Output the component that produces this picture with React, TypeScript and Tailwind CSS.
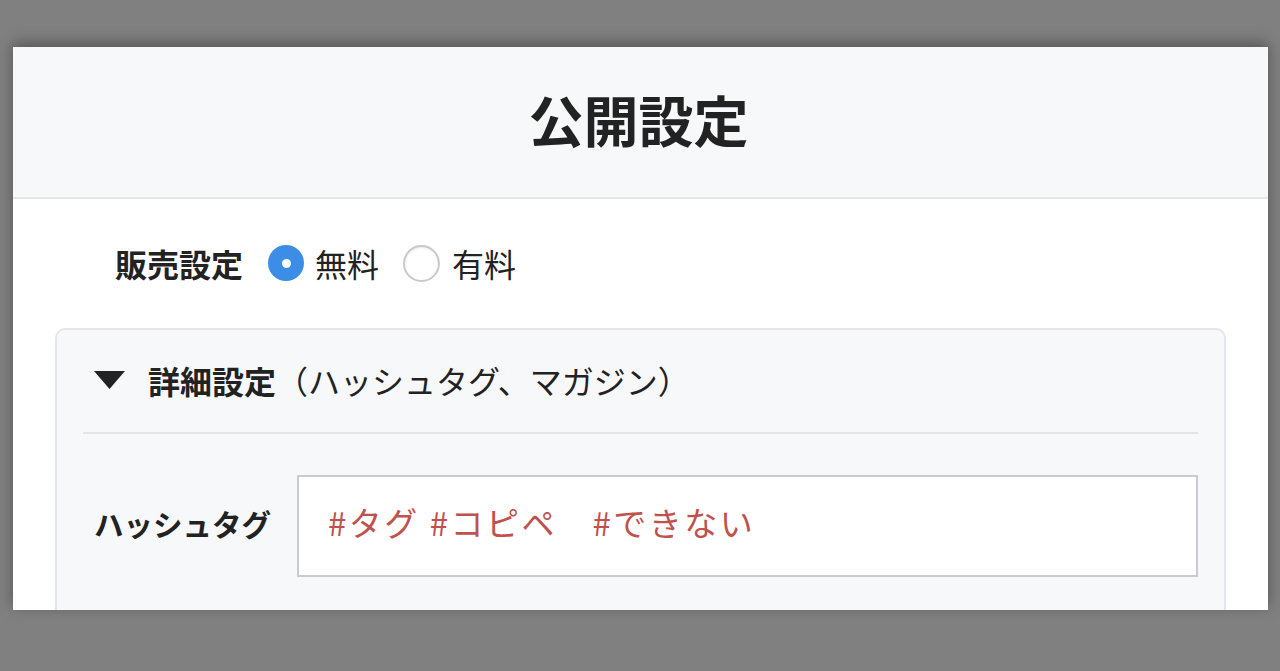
import React from "react";

const font = { fontFamily: '"Noto Sans CJK JP", "Noto Sans", sans-serif' };

function Radio({ checked }: { checked: boolean }) {
  return checked ? (
    <span className="flex h-[36px] w-[36px] shrink-0 items-center justify-center rounded-full bg-[#3c8de6]">
      <span className="block h-[9px] w-[9px] rounded-full bg-white" />
    </span>
  ) : (
    <span className="block h-[37px] w-[37px] shrink-0 rounded-full border-2 border-[#c9c9c9] bg-white shadow-[inset_0_1px_2px_rgba(0,0,0,0.08)]" />
  );
}

export default function App() {
  return (
    <div
      className="h-[671px] w-[1280px] overflow-hidden bg-[#808080] pl-[13px] pr-[12px] pt-[47px]"
      style={font}
    >
      <div className="h-[563px] overflow-hidden bg-white shadow-[0_-4px_14px_rgba(0,0,0,0.35)]">
        <div className="flex h-[152px] items-center justify-center border-b-2 border-[#e4e6e9] bg-[#f7f8fa] pb-[8px] pr-[4px]">
          <h1 className="text-[55px] font-bold leading-none text-[#222222]">公開設定</h1>
        </div>
        <div className="px-[42px] pt-[46px]">
          <div className="flex h-[36px] items-center pl-[60px] text-[32px] text-[#222222]">
            <span className="font-bold">販売設定</span>
            <span className="ml-[25px]"><Radio checked /></span>
            <span className="ml-[11px]">無料</span>
            <span className="ml-[24px]"><Radio checked={false} /></span>
            <span className="ml-[12px]">有料</span>
          </div>
          <div className="mt-[47px] rounded-[10px] border-2 border-[#e3e6ea] bg-[#f7f8fa] px-[26px] pb-[40px]">
            <div className="flex h-[102px] items-center pl-[11px] pb-[2px] text-[32px] text-[#222222]">
              <svg width="31" height="18" viewBox="0 0 31 18" className="mr-[23px]">
                <polygon points="0,0 31,0 15.5,18" fill="#222222" />
              </svg>
              <span className="font-bold">詳細設定</span>
              <span>（ハッシュタグ、マガジン）</span>
            </div>
            <div className="h-[2px] bg-[#e2e4e7]" />
            <div className="mt-[41px] flex items-center">
              <span className="w-[214px] pb-[6px] pl-[11px] text-[29.5px] font-bold text-[#222222]">ハッシュタグ</span>
              <div className="h-[102px] flex-1 border-2 border-[#c8ccd0] bg-white pl-[29px] pt-[25px] text-[33px] leading-[40px] tracking-[2.5px] text-[#c0514c]">
                #タグ #コピペ　#できない
              </div>
            </div>
          </div>
        </div>
      </div>
    </div>
  );
}
